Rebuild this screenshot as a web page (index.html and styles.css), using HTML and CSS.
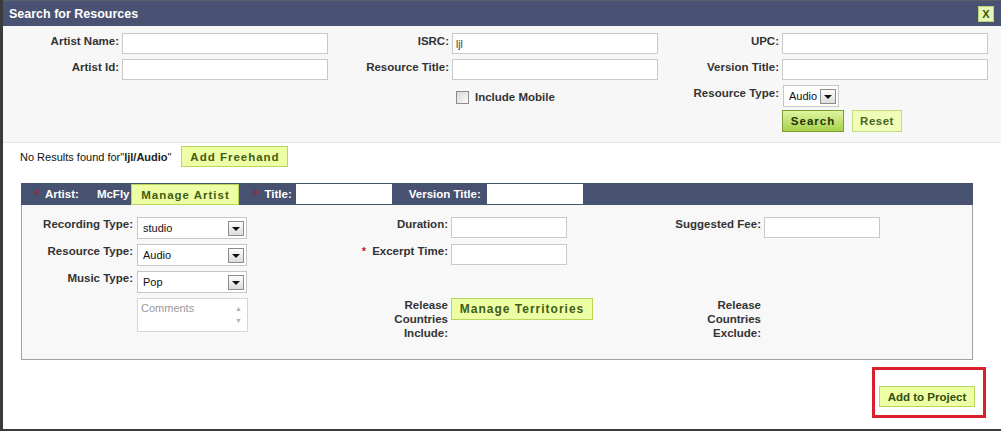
FILE: index.html
```html
<!DOCTYPE html>
<html>
<head>
<meta charset="utf-8">
<link rel="stylesheet" href="styles.css">
</head>
<body>
<div class="dialog">
  <div class="titlebar">
    <span class="title">Search for Resources</span>
    <span class="close">X</span>
  </div>

  <div class="search">
    <label class="lbl">Artist Name:</label>
    <div class="inp"></div>
    <label class="lbl">ISRC:</label>
    <div class="inp"><span class="val">ljl</span></div>
    <label class="lbl">UPC:</label>
    <div class="inp"></div>

    <label class="lbl">Artist Id:</label>
    <div class="inp"></div>
    <label class="lbl">Resource Title:</label>
    <div class="inp"></div>
    <label class="lbl">Version Title:</label>
    <div class="inp"></div>

    <div class="empty"></div>
    <div class="empty"></div>
    <div class="empty"></div>
    <div class="check-row"><span class="checkbox"></span><span class="check-text">Include Mobile</span></div>
    <label class="lbl">Resource Type:</label>
    <div><div class="sel sel-small"><span>Audio</span><i class="arrow"></i></div></div>

    <div class="empty"></div>
    <div class="empty"></div>
    <div class="empty"></div>
    <div class="empty"></div>
    <div class="empty"></div>
    <div class="btn-row"><span class="btn btn-search">Search</span><span class="btn btn-reset">Reset</span></div>
  </div>

  <div class="results">
    <span class="msg">No Results found for"<b>ljl/Audio</b>"</span>
    <span class="btn btn-light btn-freehand">Add Freehand</span>
  </div>

  <div class="panel">
    <div class="panel-head">
      <span class="star star-artist">*</span>
      <span class="head-lbl">Artist:</span>
      <span class="head-val">McFly</span>
      <span class="btn btn-light btn-artist">Manage Artist</span>
      <span class="star star-title">*</span>
      <span class="head-lbl">Title:</span>
      <span class="head-inp"></span>
      <span class="head-lbl head-ver">Version Title:</span>
      <span class="head-inp"></span>
    </div>
    <div class="panel-body">
      <label class="blbl">Recording Type:</label>
      <div class="sel"><span>studio</span><i class="arrow"></i></div>
      <label class="blbl">Duration:</label>
      <div class="binp"></div>
      <label class="blbl">Suggested Fee:</label>
      <div class="binp"></div>

      <label class="blbl">Resource Type:</label>
      <div class="sel"><span>Audio</span><i class="arrow"></i></div>
      <label class="blbl"><span class="star-red">*</span>Excerpt Time:</label>
      <div class="binp"></div>
      <div class="empty"></div>
      <div class="empty"></div>

      <label class="blbl">Music Type:</label>
      <div class="sel"><span>Pop</span><i class="arrow"></i></div>
      <div class="empty"></div>
      <div class="empty"></div>
      <div class="empty"></div>
      <div class="empty"></div>

      <div class="empty"></div>
      <div class="comments"><span class="ph">Comments</span><span class="scroll"><i>&#9650;</i><i>&#9660;</i></span></div>
      <label class="blbl multi">Release<br>Countries<br>Include:</label>
      <div><span class="btn btn-light btn-terr">Manage Territories</span></div>
      <label class="blbl multi">Release<br>Countries<br>Exclude:</label>
      <div class="empty"></div>
    </div>
  </div>

  <div class="footer">
    <div class="highlight"><span class="btn btn-light btn-add">Add to Project</span></div>
  </div>
</div>
</body>
</html>
```

FILE: styles.css
```css
html, body {
  margin: 0;
  padding: 0;
}
body {
  background: #3b3b3b;
  width: 1001px;
  height: 431px;
  overflow: hidden;
  font-family: "Liberation Sans", Arial, sans-serif;
  color: #333;
}
.dialog {
  margin-left: 3px;
  width: 998px;
  height: 429px;
  background: #fff;
  display: flex;
  flex-direction: column;
}
.titlebar {
  height: 26px;
  box-sizing: border-box;
  border-top: 1px solid #5c5f66;
  background: #495272;
  display: flex;
  align-items: center;
  justify-content: space-between;
  padding: 0 7px 0 6px;
}
.title {
  color: #fff;
  font-weight: bold;
  font-size: 12.5px;
}
.close {
  width: 16px;
  height: 16px;
  box-sizing: border-box;
  border: 1px solid #b9d47a;
  background: #e6f7b4;
  color: #2f5a0c;
  font-weight: bold;
  font-size: 11px;
  display: flex;
  align-items: center;
  justify-content: center;
  margin-top: 1px;
}

/* search area */
.search {
  height: 117px;
  box-sizing: border-box;
  background: #f7f7f7;
  border-bottom: 1px solid #e6e6e6;
  padding-top: 7px;
  display: grid;
  grid-template-columns: 119px 206px 124px 206px 124px 206px;
  grid-auto-rows: 21px;
  row-gap: 5px;
}
.lbl {
  font-weight: bold;
  font-size: 11.5px;
  text-align: right;
  padding-right: 3px;
  padding-top: 1px;
  line-height: 14px;
  white-space: nowrap;
}
.inp {
  box-sizing: border-box;
  height: 21px;
  border: 1px solid #c9c9c9;
  background: #fff;
  font-size: 10px;
  padding: 5px 3px 0;
}
.val { color: #333; }
.check-row {
  display: flex;
  align-items: center;
  padding-left: 4px;
  padding-top: 3px;
}
.checkbox {
  width: 13px;
  height: 13px;
  box-sizing: border-box;
  border: 1px solid #8d8d8d;
  background: linear-gradient(135deg, #d9d9d9, #fbfbfb);
}
.check-text {
  margin-left: 6px;
  font-weight: bold;
  font-size: 11.5px;
}

.sel {
  box-sizing: border-box;
  height: 22px;
  border: 1px solid #c7c7c7;
  background: #fff;
  display: flex;
  align-items: center;
  justify-content: space-between;
  padding: 0 2px 0 5px;
  font-size: 11px;
  color: #111;
}
.sel-small {
  width: 56px;
  margin-left: 1px;
  height: 22px;
}
.arrow {
  width: 16px;
  height: 15px;
  box-sizing: border-box;
  border: 1px solid #8c8c8c;
  background: linear-gradient(#fdfdfd, #dcdcdc);
  display: flex;
  align-items: center;
  justify-content: center;
}
.arrow::after {
  content: "";
  width: 0;
  height: 0;
  border-left: 4px solid transparent;
  border-right: 4px solid transparent;
  border-top: 4px solid #111;
  margin-top: 2px;
}
.btn-row {
  display: flex;
  gap: 8px;
  height: 22px;
  margin-top: -1px;
}
.btn {
  box-sizing: border-box;
  display: inline-flex;
  align-items: center;
  justify-content: center;
  font-weight: bold;
  font-size: 11.5px;
  white-space: nowrap;
}
.btn-search {
  width: 62px;
  height: 22px;
  border: 1px solid #7e9d2c;
  background: linear-gradient(#dff5a0, #a6d14a);
  color: #24340b;
  letter-spacing: 1px;
}
.btn-reset {
  width: 50px;
  height: 22px;
  border: 1px solid #c3dc7c;
  background: #f0fdb8;
  color: #476624;
  letter-spacing: 0.5px;
}
.btn-light {
  height: 21px;
  border: 1px solid #b7d65a;
  background: #eefea4;
  color: #3f5d14;
  letter-spacing: 1px;
}

/* results */
.results {
  height: 40px;
  display: flex;
  align-items: flex-start;
  padding-left: 17px;
  padding-top: 3px;
  box-sizing: border-box;
}
.msg {
  font-size: 11px;
  color: #111;
  margin-top: 5px;
}
.msg b { color: #222; }
.btn-freehand {
  width: 107px;
  margin-left: 10px;
}

/* panel */
.panel {
  margin-left: 18px;
  width: 952px;
}
.panel-head {
  height: 22px;
  background: #475170;
  display: flex;
  align-items: center;
  color: #fff;
  font-weight: bold;
  font-size: 11.5px;
}
.star {
  color: #a3263a;
  font-size: 12px;
  width: 8px;
  margin-top: 2px;
}
.star-artist { margin-left: 13px; }
.star-title { margin-left: 14px; }
.head-lbl { margin-left: 3px; }
.head-val { margin-left: 18px; }
.btn-artist {
  width: 108px;
  height: 21px;
  margin-left: 2px;
  margin-top: 1px;
  letter-spacing: 1px;
}
.head-inp {
  width: 96px;
  height: 20px;
  background: #fff;
  margin-left: 4px;
}
.head-ver { margin-left: 17px; }
.head-ver + .head-inp { margin-left: 6px; }

.panel-body {
  height: 155px;
  box-sizing: border-box;
  border: 1px solid #a1a1a1;
  border-top: none;
  background: #f8f8f8;
  padding-top: 12px;
  display: grid;
  grid-template-columns: 115px 110px 204px 141px 172px 116px;
  grid-template-rows: 22px 22px 22px 34px;
  row-gap: 5px;
}
.blbl {
  font-weight: bold;
  font-size: 11.5px;
  text-align: right;
  padding-right: 4px;
  line-height: 14px;
  white-space: nowrap;
}
.blbl.multi { padding-right: 3px; line-height: 14px; }
.panel-body .blbl:nth-child(3),
.panel-body .blbl:nth-child(5),
.panel-body .blbl:nth-child(9) { padding-right: 3px; }
.star-red {
  color: #b3253a;
  font-size: 11px;
  margin-right: 6px;
}
.binp {
  width: 116px;
  height: 21px;
  box-sizing: border-box;
  border: 1px solid #c9c9c9;
  background: #fff;
}
.comments {
  height: 34px;
  width: 111px;
  box-sizing: border-box;
  border: 1px solid #d6d6d6;
  background: #fff;
  display: flex;
  justify-content: space-between;
  padding: 3px 2px 0 3px;
}
.ph {
  color: #999;
  font-size: 11px;
}
.scroll {
  display: flex;
  flex-direction: column;
  color: #b0b0b0;
  font-size: 7px;
  gap: 5px;
  padding-top: 3px;
  padding-right: 3px;
}
.scroll i { font-style: normal; }
.btn-terr {
  width: 142px;
  height: 22px;
  font-size: 12px;
  letter-spacing: 1px;
}

/* footer */
.footer {
  display: flex;
  justify-content: flex-end;
  padding-right: 15px;
  padding-top: 7px;
}
.highlight {
  width: 114px;
  height: 51px;
  box-sizing: border-box;
  border: 3px solid #d9202c;
  padding: 16px 0 0 4px;
}
.btn-add {
  width: 96px;
  height: 21px;
  letter-spacing: 0;
  color: #2f4f10;
  font-size: 11.5px;
}
```
